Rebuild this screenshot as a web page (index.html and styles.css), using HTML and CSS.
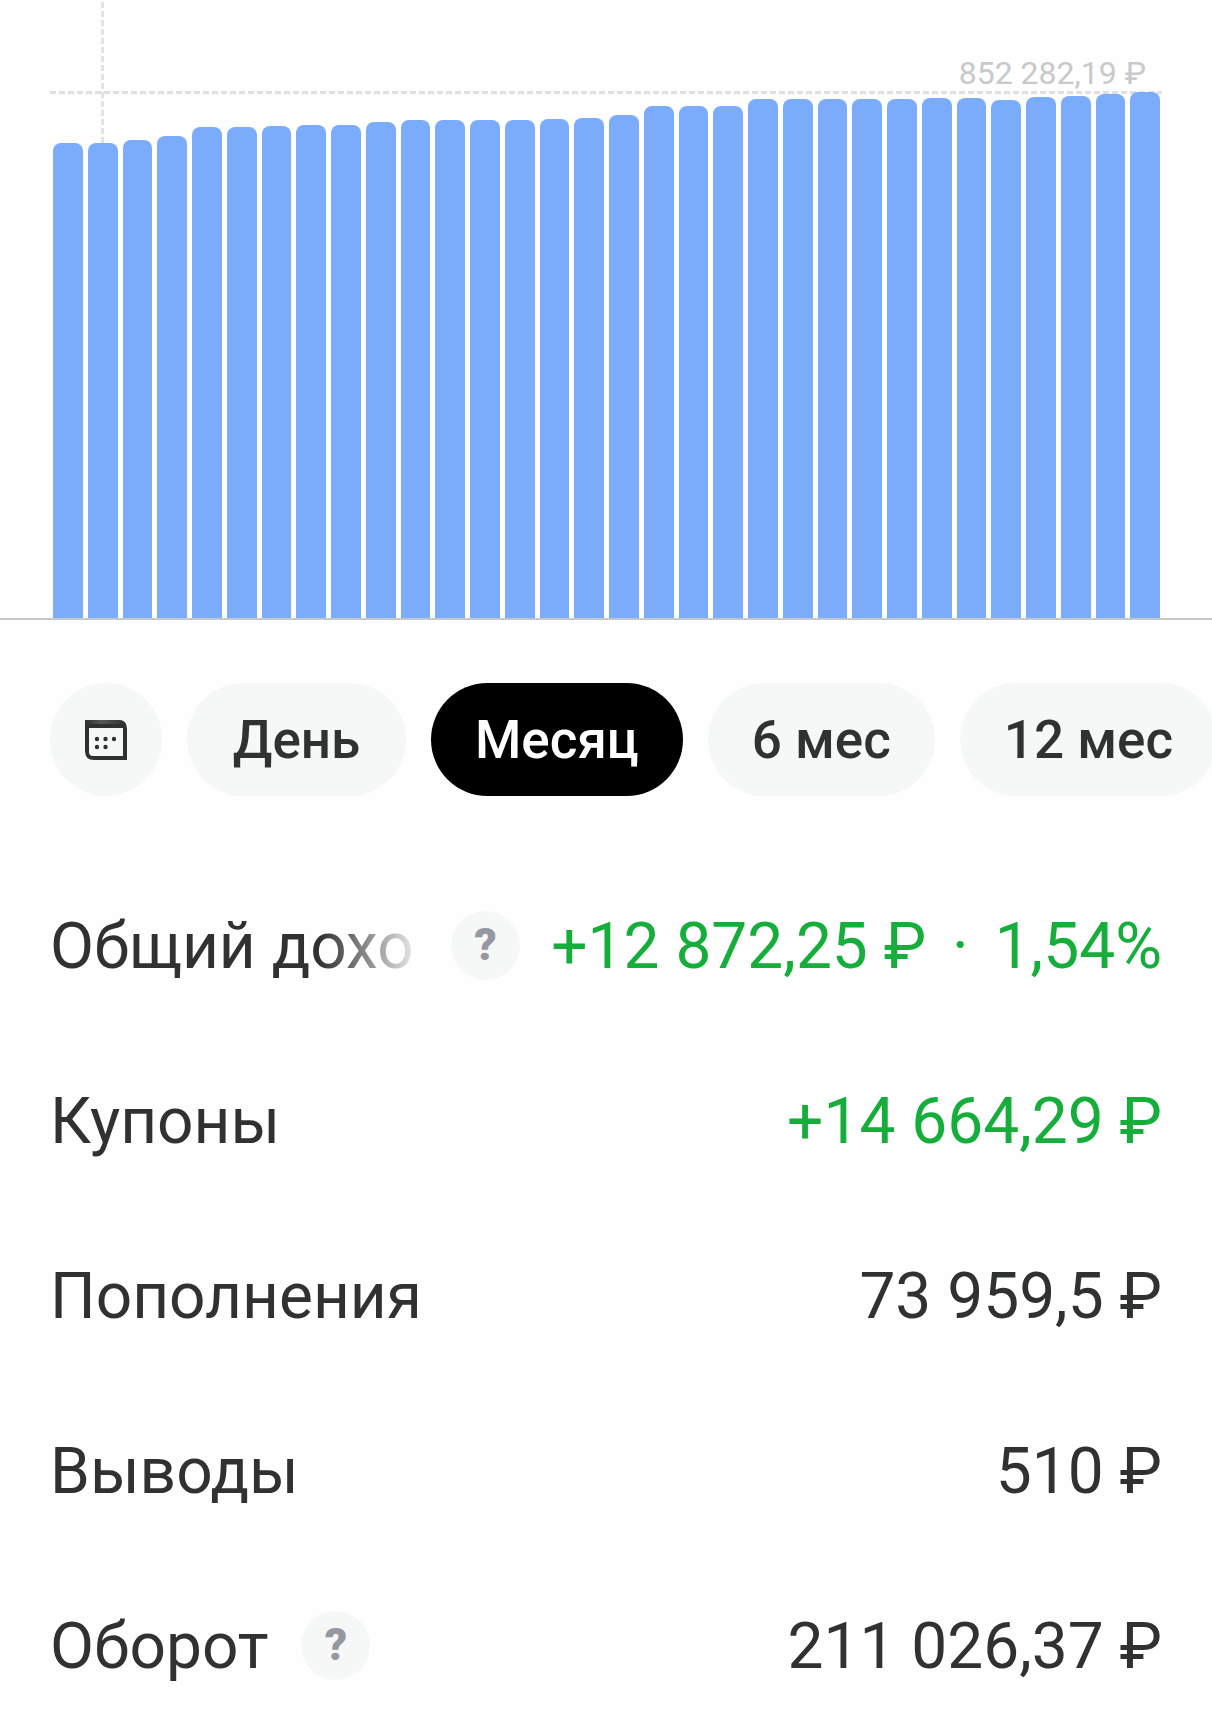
FILE: index.html
```html
<!DOCTYPE html>
<html lang="ru">
<head>
    <meta charset="UTF-8">
    <meta name="viewport" content="width=device-width, initial-scale=1.0">
    <title>Доходность портфеля</title>
    <link rel="stylesheet" href="styles.css">
</head>
<body>

    <!-- Portfolio value by day -->
    <div class="chart">
        <div class="month-line"></div>
        <div class="max-line"></div>
        <div class="max-value">852 282,19 ₽</div>
        <div class="bars">
            <div class="bar" style="height: 475px"></div>
            <div class="bar" style="height: 475px"></div>
            <div class="bar" style="height: 478px"></div>
            <div class="bar" style="height: 482px"></div>
            <div class="bar" style="height: 491px"></div>
            <div class="bar" style="height: 491px"></div>
            <div class="bar" style="height: 492px"></div>
            <div class="bar" style="height: 493px"></div>
            <div class="bar" style="height: 493px"></div>
            <div class="bar" style="height: 496px"></div>
            <div class="bar" style="height: 498px"></div>
            <div class="bar" style="height: 498px"></div>
            <div class="bar" style="height: 498px"></div>
            <div class="bar" style="height: 498px"></div>
            <div class="bar" style="height: 499px"></div>
            <div class="bar" style="height: 500px"></div>
            <div class="bar" style="height: 503px"></div>
            <div class="bar" style="height: 512px"></div>
            <div class="bar" style="height: 512px"></div>
            <div class="bar" style="height: 512px"></div>
            <div class="bar" style="height: 519px"></div>
            <div class="bar" style="height: 519px"></div>
            <div class="bar" style="height: 519px"></div>
            <div class="bar" style="height: 519px"></div>
            <div class="bar" style="height: 519px"></div>
            <div class="bar" style="height: 520px"></div>
            <div class="bar" style="height: 520px"></div>
            <div class="bar" style="height: 518px"></div>
            <div class="bar" style="height: 521px"></div>
            <div class="bar" style="height: 522px"></div>
            <div class="bar" style="height: 524px"></div>
            <div class="bar" style="height: 526px"></div>
        </div>
    </div>

    <!-- Period picker -->
    <div class="periods">
        <button class="period calendar" aria-label="Выбрать даты">
            <svg width="42" height="40" viewBox="0 0 42 40">
                <defs>
                    <linearGradient id="top" x1="0" y1="0" x2="1" y2="0">
                        <stop offset="0" stop-color="#2f3030"/>
                        <stop offset="0.4" stop-color="#555656"/>
                        <stop offset="1" stop-color="#2f3030"/>
                    </linearGradient>
                </defs>
                <path fill="#2f3030" fill-rule="evenodd" d="M0 0H33Q42 0 42 9V40H9Q0 40 0 31ZM4 8V32Q4 36 8 36H38V8Z"/>
                <path fill="url(#top)" d="M0 0H33Q39 0 41 4H0Z"/>
                <g fill="#2f3030">
                    <circle cx="12" cy="19" r="2.2"/>
                    <circle cx="20.5" cy="19" r="2.2"/>
                    <circle cx="29" cy="19" r="2.2"/>
                    <circle cx="12" cy="27" r="2.2"/>
                    <circle cx="20.5" cy="27" r="2.2"/>
                </g>
            </svg>
        </button>
        <button class="period">День</button>
        <button class="period active">Месяц</button>
        <button class="period">6 мес</button>
        <button class="period">12 мес</button>
    </div>

    <!-- Totals -->
    <div class="stats">
        <div class="stat">
            <span class="label fade">Общий дохо</span>
            <button class="help" aria-label="Что такое общий доход">?</button>
            <span class="value green">+12 872,25 ₽ <span class="dot">·</span> 1,54%</span>
        </div>
        <div class="stat">
            <span class="label">Купоны</span>
            <span class="value green">+14 664,29 ₽</span>
        </div>
        <div class="stat">
            <span class="label">Пополнения</span>
            <span class="value">73 959,5 ₽</span>
        </div>
        <div class="stat">
            <span class="label">Выводы</span>
            <span class="value">510 ₽</span>
        </div>
        <div class="stat">
            <span class="label">Оборот</span>
            <button class="help" aria-label="Что такое оборот">?</button>
            <span class="value">211 026,37 ₽</span>
        </div>
    </div>

</body>
</html>
```
FILE: styles.css
```css
/* Basic reset and body styling */
* {
    margin: 0;
    padding: 0;
    box-sizing: border-box;
}

body {
    font-family: Roboto, "Noto Sans", sans-serif;
    color: #303131;
    background-color: #fefefe;
    overflow-x: hidden;
}

button {
    font-family: inherit;
    border: none;
    cursor: pointer;
}

/* Chart */
.chart {
    position: relative;
    height: 620px;
    padding: 0 52px 0 53px;
    border-bottom: 2px solid #c6c7c9;
    display: flex;
    align-items: flex-end;
}

.bars {
    position: relative;
    flex-grow: 1;
    display: flex;
    align-items: flex-end;
    gap: 5px;
}

.bar {
    flex: 1;
    background-color: #7aacfb;
    border-radius: 8px 8px 0 0;
}

/* Dashed guides behind the bars */
.max-line {
    position: absolute;
    top: 91px;
    left: 50px;
    right: 50px;
    height: 3px;
    background: repeating-linear-gradient(to right, #dfe0e0 0 6px, transparent 6px 9px);
}

.month-line {
    position: absolute;
    top: 2px;
    left: 101px;
    width: 3px;
    height: 150px;
    background: repeating-linear-gradient(to bottom, #e2e2e2 0 6px, transparent 6px 9px);
}

.max-value {
    position: absolute;
    top: 54px;
    right: 66px;
    font-size: 32px;
    line-height: 38px;
    color: #c8c9ca;
}

/* Period buttons */
.periods {
    display: flex;
    gap: 25px;
    margin-top: 63px;
    padding-left: 50px;
    overflow: hidden;
}

.period {
    flex-shrink: 0;
    min-width: 219px;
    height: 113px;
    padding: 0 44px;
    border-radius: 57px;
    background-color: #f6f8f8;
    color: #303131;
    font-size: 53px;
    font-weight: 500;
    white-space: nowrap;
}

.period.calendar {
    width: 112px;
    min-width: 0;
    padding: 0;
    display: flex;
    justify-content: center;
    align-items: center;
}

.period.active {
    background-color: #000;
    color: #fff;
}

/* Totals */
.stats {
    display: flex;
    flex-direction: column;
    gap: 63px;
    margin-top: 93px;
    padding: 0 50px;
}

.stat {
    display: flex;
    align-items: center;
    height: 112px;
    font-size: 64px;
    white-space: nowrap;
}

.label,
.value {
    padding-top: 2px;
}

.label.fade {
    width: 368px;
    -webkit-mask-image: linear-gradient(to right, #000 270px, transparent 376px);
    mask-image: linear-gradient(to right, #000 270px, transparent 376px);
}

.value {
    margin-left: auto;
}

.green {
    color: #15ae3a;
}

.dot {
    margin: 0 10px;
}

.help {
    flex-shrink: 0;
    width: 69px;
    height: 69px;
    margin-left: 33px;
    border-radius: 50%;
    background-color: #f6f8f8;
    color: #9598a1;
    font-size: 44px;
    font-weight: 900;
}
```
